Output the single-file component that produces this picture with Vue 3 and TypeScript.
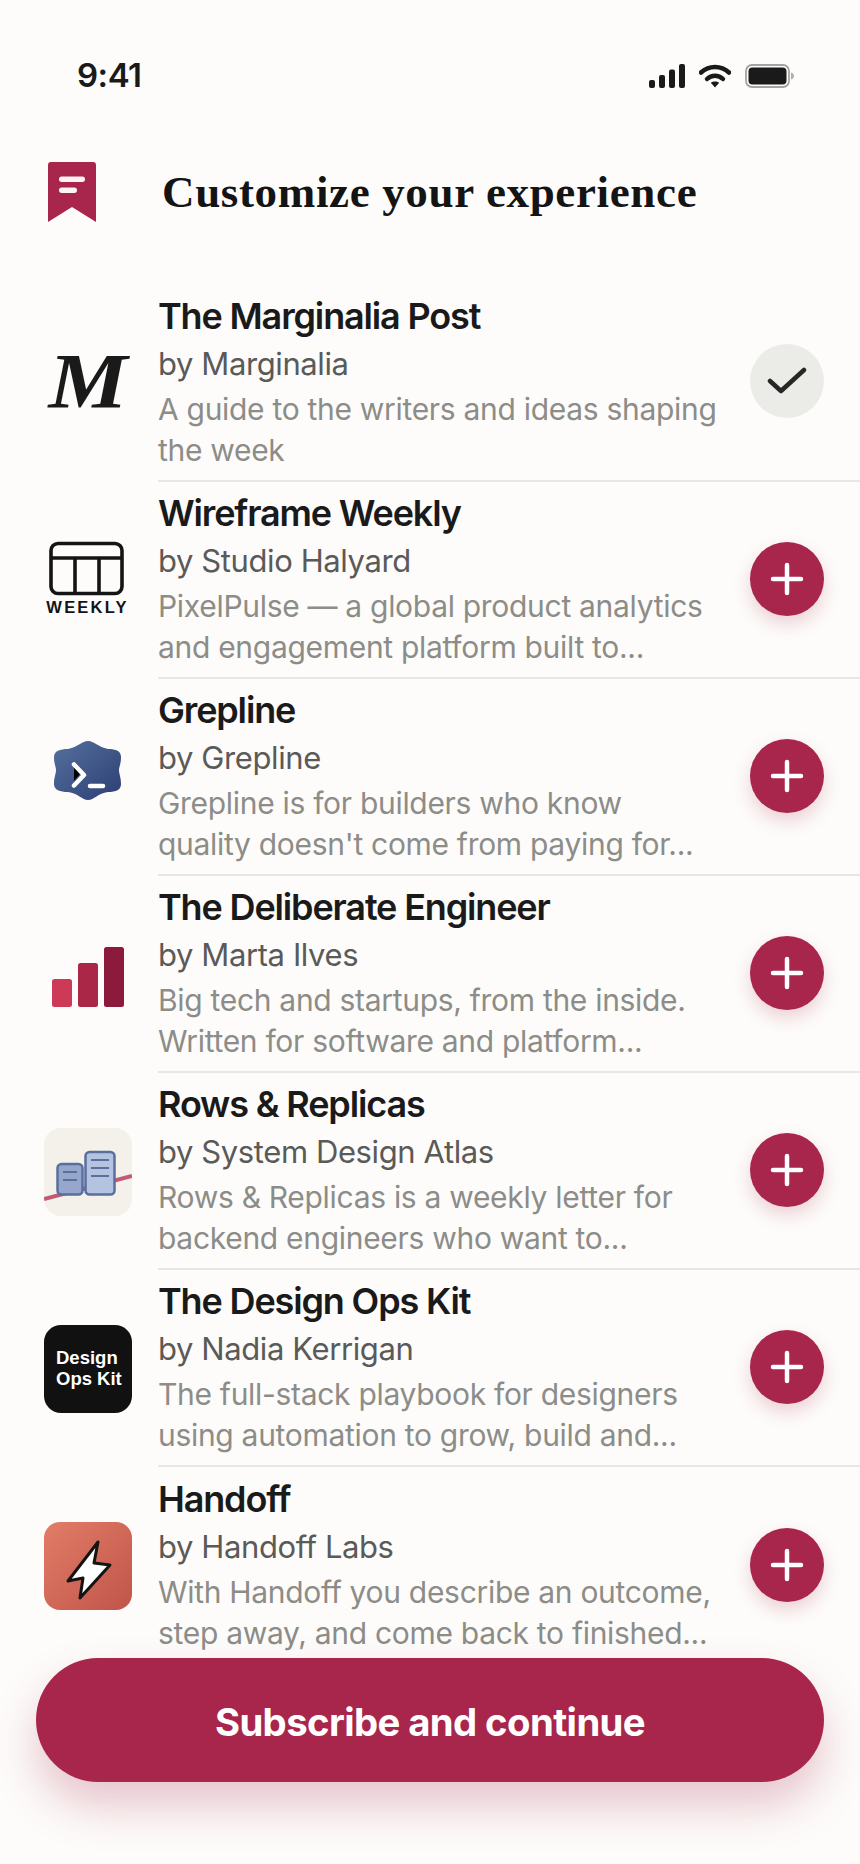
<script setup lang="ts">
interface Publication {
  name: string;
  author: string;
  lines: string[];
  logo: string;
  subscribed?: boolean;
}

const publications: Publication[] = [
  {
    name: 'The Marginalia Post',
    author: 'by Marginalia',
    lines: ['A guide to the writers and ideas shaping', 'the week'],
    logo: 'marginalia',
    subscribed: true,
  },
  {
    name: 'Wireframe Weekly',
    author: 'by Studio Halyard',
    lines: ['PixelPulse — a global product analytics', 'and engagement platform built to...'],
    logo: 'weekly',
  },
  {
    name: 'Grepline',
    author: 'by Grepline',
    lines: ['Grepline is for builders who know', "quality doesn't come from paying for..."],
    logo: 'grepline',
  },
  {
    name: 'The Deliberate Engineer',
    author: 'by Marta Ilves',
    lines: ['Big tech and startups, from the inside.', 'Written for software and platform...'],
    logo: 'bars',
  },
  {
    name: 'Rows & Replicas',
    author: 'by System Design Atlas',
    lines: ['Rows & Replicas is a weekly letter for', 'backend engineers who want to...'],
    logo: 'rows',
  },
  {
    name: 'The Design Ops Kit',
    author: 'by Nadia Kerrigan',
    lines: ['The full-stack playbook for designers', 'using automation to grow, build and...'],
    logo: 'ops',
  },
  {
    name: 'Handoff',
    author: 'by Handoff Labs',
    lines: ['With Handoff you describe an outcome,', 'step away, and come back to finished...'],
    logo: 'handoff',
  },
];
</script>

<template>
  <main class="page">
    <header class="status">
      <span class="time">9:41</span>
      <div class="status-icons">
        <svg width="36" height="24" viewBox="0 0 36 24">
          <rect x="0" y="16" width="6" height="8" rx="2" />
          <rect x="10" y="11" width="6" height="13" rx="2" />
          <rect x="20" y="5.5" width="6" height="18.5" rx="2" />
          <rect x="30" y="0" width="6" height="24" rx="2" />
        </svg>
        <svg width="32" height="24" viewBox="0 0 32 24" class="wifi">
          <path d="M2 8.5C10 1 22 1 30 8.5" />
          <path d="M8 15C12.500 10.500 19.500 10.500 24 15" />
          <path class="wifi-dot" d="M16 23.500L11.800 18.800C14 16.900 18 16.900 20.200 18.800Z" />
        </svg>
        <svg width="49" height="24" viewBox="0 0 49 24">
          <rect x="1" y="1" width="43" height="22" rx="6" fill="none" stroke="#a3a3a3" stroke-width="1.800" />
          <rect x="3.500" y="3.500" width="38" height="17" rx="4" />
          <path d="M46 8.500c1.800.6 3 1.800 3 3.500s-1.200 2.900-3 3.500z" fill="#b0b0b0" />
        </svg>
      </div>
    </header>

    <section class="intro">
      <svg class="brand" width="48" height="60" viewBox="0 0 48 60">
        <path d="M3 0H45a3 3 0 0 1 3 3V60L24 45L0 60V3a3 3 0 0 1 3-3Z" fill="#a8254b" />
        <rect x="11" y="14.500" width="26" height="5.500" rx="2.700" fill="#fdf3f3" />
        <rect x="11" y="25.500" width="18" height="5.500" rx="2.700" fill="#fdf3f3" />
      </svg>
      <h1>Customize your experience</h1>
    </section>

    <ul class="list">
      <li v-for="pub in publications" :key="pub.name" class="row">
        <div class="logo">
          <span v-if="pub.logo === 'marginalia'" class="logo-m">M</span>

          <svg v-else-if="pub.logo === 'weekly'" width="88" height="88" viewBox="0 0 88 88">
            <g fill="none" stroke="#141414" stroke-width="3.600">
              <rect x="7" y="6.500" width="71" height="50" rx="7" />
              <path d="M7 21H78M31 21V56M55 21V56" />
            </g>
            <text x="43.500" y="76" class="weekly-text">WEEKLY</text>
          </svg>

          <svg v-else-if="pub.logo === 'grepline'" width="88" height="88" viewBox="0 0 88 88">
            <defs>
              <linearGradient id="grep" x1="0" y1="0" x2="1" y2="1">
                <stop offset="0" stop-color="#54709f" />
                <stop offset="1" stop-color="#2d3f72" />
              </linearGradient>
            </defs>
            <g transform="translate(0 -14)">
              <path
                d="M44 21C50 21 54 27 64 29C72 29 77 31 77 37C77 44 75 47 75 50C75 54 77 57 77 64C77 70 72 72 64 72C54 73 50 80 44 80C38 80 34 73 24 72C16 72 10 70 10 64C10 57 12 54 12 50C12 47 10 44 10 37C10 31 16 29 24 29C34 27 38 21 44 21Z"
                fill="url(#grep)"
              />
              <path d="M30 46L36 54L30 61Z" fill="#000" />
              <path d="M30 44.500L40 55L30 65.500" fill="none" stroke="#fff" stroke-width="4.500" stroke-linecap="round" stroke-linejoin="round" />
              <path d="M46 66H59" stroke="#fff" stroke-width="4.500" stroke-linecap="round" />
            </g>
          </svg>

          <svg v-else-if="pub.logo === 'bars'" width="88" height="88" viewBox="0 0 88 88">
            <rect x="8" y="48" width="20" height="28" rx="2.500" fill="#cc3a58" />
            <rect x="34" y="32" width="20" height="44" rx="2.500" fill="#ab2748" />
            <rect x="60" y="16" width="20" height="60" rx="2.500" fill="#8b1a3d" />
          </svg>

          <svg v-else-if="pub.logo === 'rows'" class="tile" width="88" height="88" viewBox="0 0 88 88">
            <rect width="88" height="88" rx="17" fill="#f3f1ea" />
            <path d="M0 71L88 48" stroke="#c05a75" stroke-width="4" />
            <rect x="13.500" y="36" width="25" height="30.500" rx="4" fill="#97a6cb" stroke="#5a6f9e" stroke-width="2.500" />
            <rect x="41.500" y="24" width="29" height="42.500" rx="4" fill="#b4c3e0" stroke="#5a6f9e" stroke-width="2.500" />
            <path d="M19 44H33M19 52H33M47 32H65M47 40H65M47 48H65" stroke="#5a6f9e" stroke-width="2" />
          </svg>

          <div v-else-if="pub.logo === 'ops'" class="logo-ops">Design<br />Ops Kit</div>

          <svg v-else class="tile" width="88" height="88" viewBox="0 0 88 88">
            <defs>
              <linearGradient id="hand" x1="0" y1="0" x2="1" y2="1">
                <stop offset="0" stop-color="#e27d67" />
                <stop offset="1" stop-color="#c0544a" />
              </linearGradient>
            </defs>
            <rect width="88" height="88" rx="16" fill="url(#hand)" />
            <path d="M54 20L24 59L39 56L36 76L66 43L50 41Z" fill="#fff" stroke="#141414" stroke-width="3" stroke-linejoin="round" />
          </svg>
        </div>

        <div class="body">
          <div class="copy">
            <h2>{{ pub.name }}</h2>
            <p class="author">{{ pub.author }}</p>
            <p v-for="line in pub.lines" :key="line" class="desc">{{ line }}</p>
          </div>
          <button class="action" :class="{ done: pub.subscribed }">
            <svg v-if="pub.subscribed" width="40" height="40" viewBox="0 0 40 40">
              <path d="M3 19L14 29L37 8" transform="translate(0 1)" fill="none" stroke="#262626" stroke-width="4.500" stroke-linecap="round" stroke-linejoin="round" />
            </svg>
            <svg v-else width="34" height="34" viewBox="0 0 34 34">
              <path d="M17 3V31M3 17H31" fill="none" stroke="#fff" stroke-width="4.500" stroke-linecap="round" />
            </svg>
          </button>
        </div>
      </li>
    </ul>

    <button class="cta">Subscribe and continue</button>
  </main>
</template>

<style scoped>
.page {
  position: relative;
  width: 860px;
  height: 1864px;
  overflow: hidden;
  background: #fdfcfa;
  font-family: Inter, "Noto Sans", sans-serif;
  color: #1a1a1a;
}

.status {
  height: 150px;
  box-sizing: border-box;
  padding: 54px 66px 0 77px;
  display: flex;
  justify-content: space-between;
  align-items: flex-start;
}

.time {
  font-size: 33px;
  line-height: 42px;
  font-weight: 600;
  letter-spacing: -0.5px;
}

.status-icons {
  display: flex;
  gap: 14px;
  padding-top: 10px;
  fill: #1a1a1a;
}

.wifi path {
  fill: none;
  stroke: #1a1a1a;
  stroke-width: 4.500;
  stroke-linecap: round;
}

.wifi .wifi-dot {
  fill: #1a1a1a;
  stroke: none;
}

.intro {
  height: 135px;
  box-sizing: border-box;
  padding: 12px 0 0 48px;
  display: flex;
  align-items: flex-start;
  gap: 66px;
}

.brand {
  flex: none;
}

h1 {
  margin: 0;
  font-family: "Liberation Serif", serif;
  font-size: 45px;
  line-height: 60px;
  font-weight: 700;
  letter-spacing: 0.65px;
  color: #141414;
}

.list {
  margin: 0;
  padding: 0;
  list-style: none;
}

.row {
  height: 197px;
  display: flex;
}

.logo {
  flex: none;
  width: 158px;
  box-sizing: border-box;
  padding-left: 44px;
  display: flex;
  align-items: center;
}

.tile {
  display: block;
}

.logo-m {
  width: 88px;
  margin-bottom: 6px;
  text-align: center;
  font-family: "Liberation Serif", serif;
  font-style: italic;
  font-weight: 700;
  font-size: 78px;
  line-height: 88px;
  color: #1a1a1a;
  transform: scaleX(1.14);
}

.weekly-text {
  font-family: "Liberation Sans", sans-serif;
  font-size: 16.500px;
  font-weight: 700;
  letter-spacing: 2.200px;
  text-anchor: middle;
  fill: #141414;
}

.logo-ops {
  width: 88px;
  height: 88px;
  box-sizing: border-box;
  padding-top: 22px;
  padding-left: 12px;
  border-radius: 17px;
  background: #111;
  color: #fff;
  font-family: "Liberation Sans", sans-serif;
  font-size: 18.500px;
  line-height: 21px;
  font-weight: 700;
}

.body {
  flex: 1;
  min-width: 0;
  box-sizing: border-box;
  padding-right: 36px;
  border-bottom: 2px solid #e8e7e3;
  display: flex;
  align-items: center;
  justify-content: space-between;
}

.row:last-child .body {
  border-bottom: none;
}

.copy {
  min-width: 0;
}

h2 {
  margin: 0 0 1px;
  font-size: 36px;
  line-height: 44px;
  font-weight: 600;
  letter-spacing: -1.15px;
  color: #1a1a1a;
}

.author,
.desc {
  margin: 0;
  white-space: nowrap;
}

.author {
  font-size: 31px;
  line-height: 50px;
  color: #5a5a58;
  letter-spacing: -0.4px;
}

.desc {
  font-size: 30px;
  line-height: 41px;
  color: #8c8c88;
  letter-spacing: -0.3px;
}

.action {
  flex: none;
  width: 74px;
  height: 74px;
  margin-bottom: 2px;
  padding: 0;
  border: none;
  border-radius: 50%;
  background: #a8254b;
  box-shadow: 0 8px 18px rgba(168, 37, 75, 0.2);
  display: flex;
  align-items: center;
  justify-content: center;
}

.action.done {
  margin-bottom: 4px;
  background: #ebebe8;
  box-shadow: none;
}

.cta {
  position: absolute;
  left: 36px;
  top: 1658px;
  width: 788px;
  height: 124px;
  padding: 3px 0 0;
  border: none;
  border-radius: 62px;
  background: #a8254b;
  box-shadow: 0 24px 44px rgba(168, 37, 75, 0.25);
  color: #fff;
  font-family: Inter, sans-serif;
  font-size: 38.300px;
  font-weight: 700;
  letter-spacing: -0.6px;
}
</style>
